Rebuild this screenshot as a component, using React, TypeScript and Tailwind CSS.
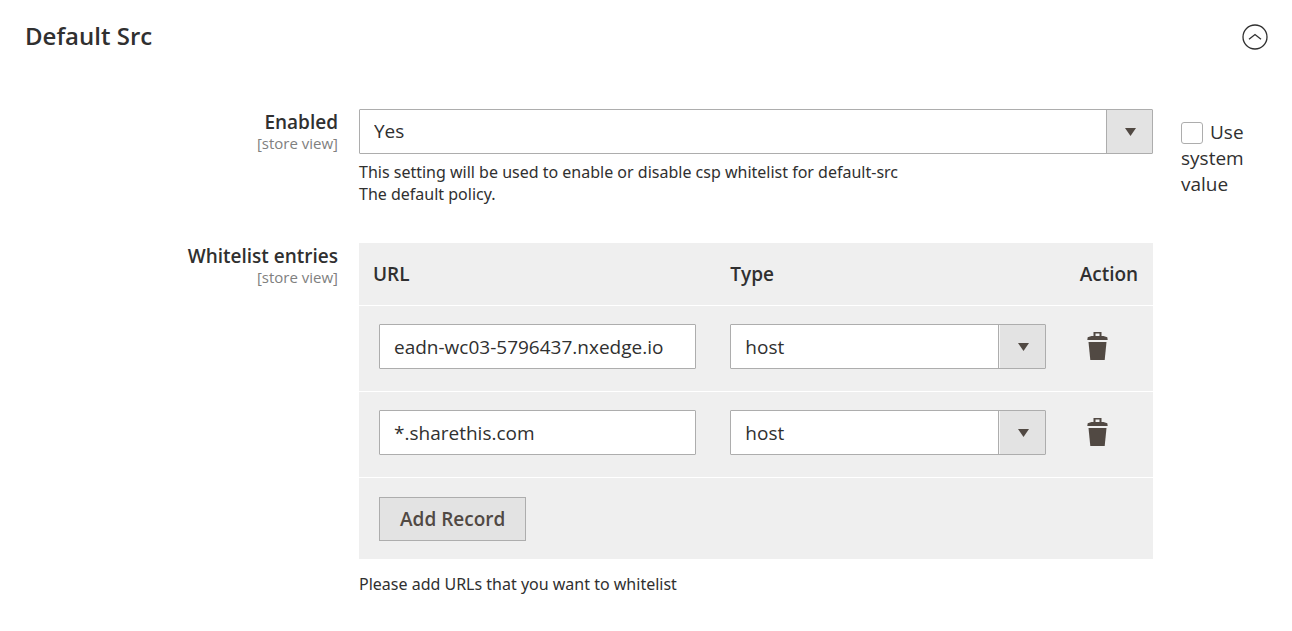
import { useState } from "react";

type Entry = { id: number; url: string; type: string };

const initialEntries: Entry[] = [
  { id: 1, url: "eadn-wc03-5796437.nxedge.io", type: "host" },
  { id: 2, url: "*.sharethis.com", type: "host" },
];

function SelectBox({
  id,
  label,
  value,
  options,
  divided,
}: {
  id: string;
  label?: string;
  value: string;
  options: string[];
  divided?: boolean;
}) {
  return (
    <div className="relative">
      <select
        id={id}
        aria-label={label}
        defaultValue={value}
        className={
          divided
            ? "block h-[45px] w-full appearance-none rounded-[1px] border border-[#adadad] bg-white pt-0.5 pr-14 pl-3.5 text-[19px] text-[#303030]"
            : "block h-[45px] w-full appearance-none rounded-[1px] border border-[#adadad] bg-white pr-14 pl-3.5 text-[19px] text-[#303030]"
        }
      >
        {options.map((option) => (
          <option key={option}>{option}</option>
        ))}
      </select>
      <span
        className={
          divided
            ? "pointer-events-none absolute inset-y-px right-px flex w-[47px] items-center justify-center border-l border-[#adadad] bg-[#e3e3e3] pt-0.5 pl-1 shadow-[inset_1px_0_0_#f6f6f6]"
            : "pointer-events-none absolute inset-y-px right-px flex w-[46px] items-center justify-center border-l border-[#adadad] bg-[#e3e3e3] pl-0.5"
        }
      >
        <svg width="11" height="8" viewBox="0 0 11 8" aria-hidden="true">
          <path d="M0 0h11L5.500 8z" fill="#514943" />
        </svg>
      </span>
    </div>
  );
}

function FieldLabel({ htmlFor, text }: { htmlFor: string; text: string }) {
  return (
    <label htmlFor={htmlFor} className="block text-right">
      <span className="block text-[19px] leading-[26px] font-semibold">{text}</span>
      <span className="block text-[15px] leading-4 text-[#808080]">[store view]</span>
    </label>
  );
}

function TrashIcon() {
  return (
    <svg width="21" height="28" viewBox="0 0 21 28" aria-hidden="true" fill="#514943">
      <path
        fillRule="evenodd"
        d="M6.500 0h8v4h2l3.800 1.200.4 2.800H.3l.4-2.800L4.500 4h2zM8.500 1.500V4h4V1.500z"
      />
      <path d="M1.500 10h18L17.700 28H3.300z" />
    </svg>
  );
}

export default function App() {
  const [entries, setEntries] = useState(initialEntries);
  const [open, setOpen] = useState(true);

  const addEntry = () =>
    setEntries((list) => [...list, { id: Date.now(), url: "", type: "host" }]);
  const removeEntry = (id: number) =>
    setEntries((list) => list.filter((entry) => entry.id !== id));

  return (
    <section className="bg-white pt-5 pr-6 pb-8 pl-[25px] font-['Open_Sans',sans-serif] text-[#303030]">
      <header className="flex items-center justify-between">
        <h2 className="text-2xl leading-8 font-semibold">Default Src</h2>
        <button
          type="button"
          aria-label="Toggle section"
          className="pt-0.5"
          onClick={() => setOpen(!open)}
        >
          <svg
            width="26"
            height="26"
            viewBox="0 0 26 26"
            fill="none"
            stroke="#303030"
            strokeWidth="1.300"
            aria-hidden="true"
          >
            <circle cx="13" cy="13" r="12" />
            <path d="M7 15.300l6-4.800 6 4.800" />
          </svg>
        </button>
      </header>

      {open && (
        <>
          <div className="mt-[57px] grid grid-cols-[313px_minmax(0,1fr)_115px]">
            <FieldLabel htmlFor="enabled" text="Enabled" />
            <div className="ml-[21px]">
              <SelectBox id="enabled" value="Yes" options={["Yes", "No"]} />
              <p className="mt-[7px] font-['Noto_Sans',sans-serif] text-base leading-[22px]">
                This setting will be used to enable or disable csp whitelist for default-src
                <br />
                The default policy.
              </p>
            </div>
            <label className="mt-2.5 ml-7 block text-[19px] leading-[26px]">
              <input
                type="checkbox"
                className="mr-[7px] size-[22px] appearance-none rounded-[3px] border border-[#adadad] bg-white align-[-5px] checked:bg-[#514943]"
              />
              Use system value
            </label>
          </div>

          <div className="mt-[38px] grid grid-cols-[313px_minmax(0,1fr)_115px]">
            <FieldLabel htmlFor="url-1" text="Whitelist entries" />
            <div className="ml-[21px]">
              <table className="w-full table-fixed border-collapse bg-[#efefef] text-left">
                <thead>
                  <tr className="h-[62px] text-[19px] font-semibold">
                    <th className="w-[45%] px-3.5 font-semibold">URL</th>
                    <th className="w-[44%] px-3.5 font-semibold">Type</th>
                    <th className="px-3.5 font-semibold">Action</th>
                  </tr>
                </thead>
                <tbody>
                  {entries.map((entry) => (
                    <tr key={entry.id} className="border-t border-white">
                      <td className="px-5 pt-[18px] pb-[22px]">
                        <input
                          id={`url-${entry.id}`}
                          type="text"
                          aria-label="URL"
                          defaultValue={entry.url}
                          className="block h-[45px] w-full rounded-[1px] border border-[#adadad] bg-white px-3.5 pt-0.5 text-[19px]"
                        />
                      </td>
                      <td className="pt-[18px] pr-5 pb-[22px] pl-3.5">
                        <SelectBox
                          id={`type-${entry.id}`}
                          label="Type"
                          value={entry.type}
                          options={["host", "hash"]}
                          divided
                        />
                      </td>
                      <td className="pl-[21px]">
                        <button
                          type="button"
                          aria-label="Delete"
                          className="block pb-1"
                          onClick={() => removeEntry(entry.id)}
                        >
                          <TrashIcon />
                        </button>
                      </td>
                    </tr>
                  ))}
                </tbody>
                <tfoot>
                  <tr className="border-t border-white">
                    <td colSpan={3} className="px-5 pt-[19px] pb-[18px]">
                      <button
                        type="button"
                        onClick={addEntry}
                        className="block h-11 border border-[#adadad] bg-[#e3e3e3] px-5 pt-px text-[19px] font-semibold text-[#514943]"
                      >
                        Add Record
                      </button>
                    </td>
                  </tr>
                </tfoot>
              </table>
              <p className="mt-3.5 font-['Noto_Sans',sans-serif] text-base leading-[22px]">
                Please add URLs that you want to whitelist
              </p>
            </div>
          </div>
        </>
      )}
    </section>
  );
}
